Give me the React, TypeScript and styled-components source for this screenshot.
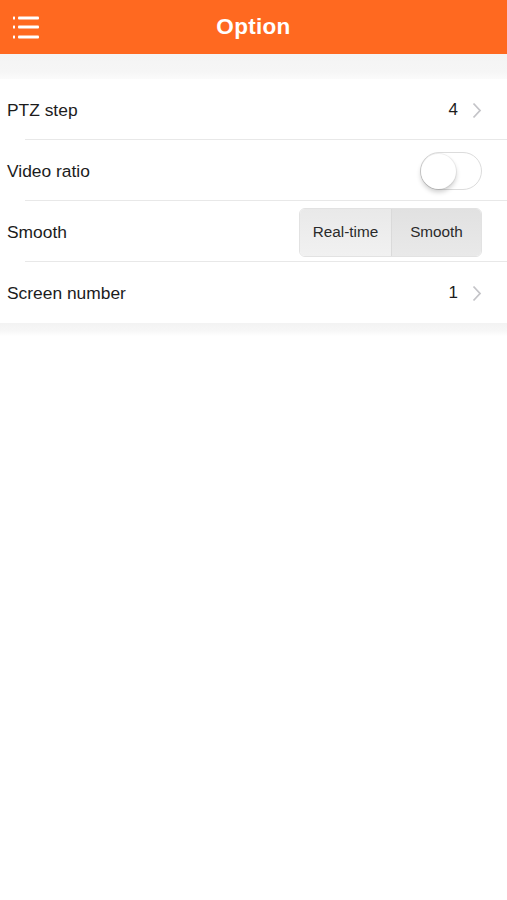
import React from "react";
import styled, { createGlobalStyle } from "styled-components";

const Global = createGlobalStyle`
  html, body { margin: 0; padding: 0; background: #ffffff; }
  body { font-family: "Liberation Sans", Arial, sans-serif; -webkit-font-smoothing: antialiased; }
`;

const Page = styled.div`
  width: 507px;
  min-height: 900px;
  background: #ffffff;
`;

const Header = styled.header`
  height: 54px;
  background: #ff6920;
  display: grid;
  grid-template-columns: 54px 1fr 54px;
  align-items: center;
`;

const MenuButton = styled.div`
  display: flex;
  align-items: center;
  padding-left: 13px;
  padding-top: 1px;
`;

const Title = styled.h1`
  margin: 0;
  text-align: center;
  color: #ffffff;
  font-family: "Liberation Sans", Arial, sans-serif;
  font-weight: 700;
  font-size: 22.5px;
  letter-spacing: 0.3px;
`;

const TopBand = styled.div`
  height: 25px;
  background: linear-gradient(#f4f4f4, #f6f6f6 70%, #fbfbfb);
`;

const BottomBand = styled.div`
  height: 13px;
  background: linear-gradient(#f3f3f3, #f7f7f7 60%, #ffffff);
`;

const List = styled.div`
  display: flex;
  flex-direction: column;
  background: #ffffff;
`;

const Row = styled.div<{ $last?: boolean }>`
  height: 61px;
  display: flex;
  align-items: center;
  justify-content: space-between;
  padding: 1px 25px 0 7px;
  box-sizing: border-box;
  position: relative;
  &::after {
    content: "";
    display: ${(p) => (p.$last ? "none" : "block")};
    position: absolute;
    left: 25px;
    right: 0;
    bottom: 0;
    height: 1px;
    background: #e8e8e8;
  }
`;

const Label = styled.span`
  font-size: 17.4px;
  color: #1c1c1c;
`;

const Value = styled.div`
  display: flex;
  align-items: center;
  gap: 14px;
  font-size: 17px;
  color: #1c1c1c;
`;

const Toggle = styled.div`
  width: 62px;
  height: 38px;
  box-sizing: border-box;
  border: 1.5px solid #dcdcdc;
  border-radius: 19px;
  background: #ffffff;
  display: flex;
  align-items: center;
`;

const Knob = styled.div`
  width: 35px;
  height: 35px;
  border-radius: 50%;
  background: #ffffff;
  box-shadow: 0 3px 5px rgba(0, 0, 0, 0.2), 0 0 0 1px rgba(0, 0, 0, 0.05);
`;

const Segmented = styled.div`
  display: grid;
  grid-template-columns: 91px 90px;
  height: 49px;
  box-sizing: border-box;
  border: 1px solid #e2e2e2;
  border-radius: 6px;
  overflow: hidden;
`;

const Segment = styled.div<{ $active?: boolean }>`
  display: flex;
  align-items: center;
  justify-content: center;
  font-size: 15.3px;
  color: #2a2a2a;
  background: ${(p) =>
    p.$active
      ? "linear-gradient(#e9e9e9, #f1f1f1)"
      : "linear-gradient(#e1e1e1, #e9e9e9)"};
  border-left: ${(p) => (p.$active ? "none" : "1px solid #dadada")};
`;

const MenuIcon = () => (
  <svg width="28" height="26" viewBox="0 0 28 26">
    {[3, 12, 22].map((y) => (
      <g key={y} fill="#ffffff">
        <rect x="0" y={y - 1.5} width="2" height="3" rx="0.5" />
        <rect x="5" y={y - 1.5} width="21" height="3" rx="1" />
      </g>
    ))}
  </svg>
);

const Chevron = () => (
  <svg width="10" height="17" viewBox="0 0 10 17">
    <path d="M1.5 1.5 L8 8.5 L1.5 15.5" fill="none" stroke="#c4c4c8" strokeWidth="1.8" />
  </svg>
);

export default function App() {
  return (
    <Page>
      <Global />
      <Header>
        <MenuButton>
          <MenuIcon />
        </MenuButton>
        <Title>Option</Title>
        <div />
      </Header>
      <TopBand />
      <List>
        <Row>
          <Label>PTZ step</Label>
          <Value>
            4
            <Chevron />
          </Value>
        </Row>
        <Row>
          <Label>Video ratio</Label>
          <Toggle>
            <Knob />
          </Toggle>
        </Row>
        <Row>
          <Label>Smooth</Label>
          <Segmented>
            <Segment $active>Real-time</Segment>
            <Segment>Smooth</Segment>
          </Segmented>
        </Row>
        <Row $last>
          <Label>Screen number</Label>
          <Value>
            1
            <Chevron />
          </Value>
        </Row>
      </List>
      <BottomBand />
    </Page>
  );
}
